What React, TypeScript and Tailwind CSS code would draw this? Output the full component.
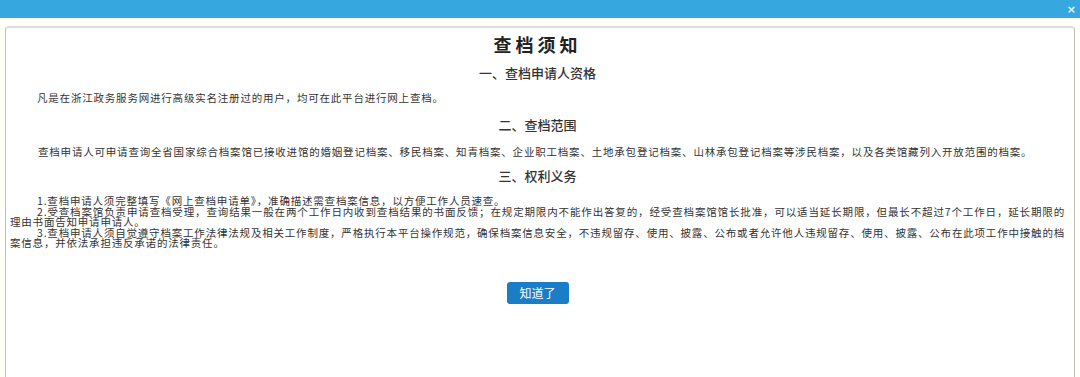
import { memo } from 'react'

const body = "font-['Noto_Sans_CJK_SC',sans-serif]"
const text = 'text-[10.5px] tracking-[0.8px]'

// each duty is written as the lines the notice breaks it into; the first line is justified to the edge
const duties = [
  ['1.查档申请人须完整填写《网上查档申请单》，准确描述需查档案信息，以方便工作人员速查。'],
  [
    '2.受查档案馆负责申请查档受理，查询结果一般在两个工作日内收到查档结果的书面反馈；在规定期限内不能作出答复的，经受查档案馆馆长批准，可以适当延长期限，但最长不超过7个工作日，延长期限的',
    '理由书面告知申请申请人。',
  ],
  [
    '3.查档申请人须自觉遵守档案工作法律法规及相关工作制度，严格执行本平台操作规范，确保档案信息安全，不违规留存、使用、披露、公布或者允许他人违规留存、使用、披露、公布在此项工作中接触的档',
    '案信息，并依法承担违反承诺的法律责任。',
  ],
]

/**
 * 查档须知 modal: blue title strip with a close cross, then a bordered panel
 * holding the notice text and a confirm button.
 */
const App = memo(function App() {
  return (
    <div className={`flex h-[377px] w-[1080px] flex-col overflow-hidden bg-white text-[#333] ${body}`}>
      <div className="flex h-[18px] shrink-0 items-center justify-end bg-[#36a8df] pr-[4px]">
        <span className="font-['DejaVu_Sans',sans-serif] text-[11px] leading-none font-bold text-white/90">×</span>
      </div>

      <div className="flex flex-1 flex-col bg-[#fffef8] px-[5px] pt-[8px]">
        <section className="flex flex-1 flex-col rounded-t-[4px] border border-t-2 border-b-0 border-[#bdbdbd] border-t-[#dcdcdc] bg-white pr-[9px] pl-[4px]">
          <h1 className="mt-[4px] text-center text-[18px] leading-[24px] font-bold tracking-[4px] text-[#222]">查档须知</h1>

          <h2 className="mt-[7px] text-center text-[13px] leading-[20px] font-medium">一、查档申请人资格</h2>
          <p className={`mt-[8px] indent-[27px] leading-[14px] ${text}`}>
            凡是在浙江政务服务网进行高级实名注册过的用户，均可在此平台进行网上查档。
          </p>

          <h2 className="mt-[10px] text-center text-[13px] leading-[20px] font-medium">二、查档范围</h2>
          <p className={`mt-[10px] indent-[28px] leading-[14px] ${text}`}>
            查档申请人可申请查询全省国家综合档案馆已接收进馆的婚姻登记档案、移民档案、知青档案、企业职工档案、土地承包登记档案、山林承包登记档案等涉民档案，以及各类馆藏列入开放范围的档案。
          </p>

          <h2 className="mt-[7px] text-center text-[13px] leading-[20px] font-medium">三、权利义务</h2>
          <div className="mt-[10px] flex flex-col">
            {duties.map((lines) =>
              lines.map((line, i) => (
                <p
                  key={line}
                  className={`whitespace-nowrap leading-[10.5px] ${text} ${
                    i === 0 ? 'pl-[27px]' : ''
                  } ${lines.length > 1 && i === 0 ? '[text-align-last:justify]' : ''}`}
                >
                  {line}
                </p>
              )),
            )}
          </div>

          <div className="mt-[33px] flex justify-center">
            <button className="h-[22px] w-[62px] rounded-[3px] bg-[#1b7dc6] text-[12px] leading-none text-white">
              知道了
            </button>
          </div>
        </section>
      </div>
    </div>
  )
})

export default App
